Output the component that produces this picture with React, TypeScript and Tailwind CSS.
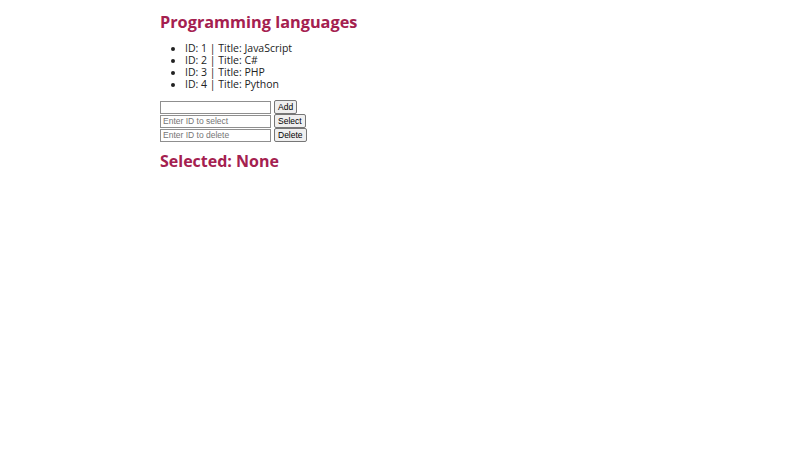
import { useState } from 'react'

type Language = { id: number; title: string }

const initialLanguages: Language[] = [
  { id: 1, title: 'JavaScript' },
  { id: 2, title: 'C#' },
  { id: 3, title: 'PHP' },
  { id: 4, title: 'Python' },
]

export default function App() {
  const [languages, setLanguages] = useState<Language[]>(initialLanguages)
  const [newTitle, setNewTitle] = useState('')
  const [selectId, setSelectId] = useState('')
  const [deleteId, setDeleteId] = useState('')
  const [selected, setSelected] = useState<Language | null>(null)

  const inputClass =
    'h-[13px] w-[111px] border border-[#8f8f8f] bg-white px-[2px] font-["Liberation_Sans",sans-serif] text-[8.5px] leading-none text-black placeholder:text-[#757575] outline-none'
  const buttonClass =
    'ml-[3px] h-[14px] rounded-[2px] border border-[#767676] bg-[#efefef] px-[3px] font-["Liberation_Sans",sans-serif] text-[8.5px] leading-none text-black'

  return (
    <div className="min-h-[450px] bg-white font-['Open_Sans',sans-serif]">
      <div className="mx-auto w-3/5 pt-[12px]">
        <h1 className="text-[16.3px] leading-[20px] font-bold text-[#a4204f]">Programming languages</h1>
        <ul className="mt-[10px] list-disc pl-[25px] text-[10.5px] leading-[12px] text-[#222]">
          {languages.map(language => (
            <li key={language.id}>{`ID: ${language.id} | Title: ${language.title}`}</li>
          ))}
        </ul>
        <div className="mt-[10px] flex flex-col">
          <div className="flex items-center">
            <input className={inputClass} onChange={e => setNewTitle(e.target.value)} value={newTitle} />
            <button
              className={buttonClass}
              onClick={() => {
                if (!newTitle.trim()) return
                const nextId = languages.length ? Math.max(...languages.map(l => l.id)) + 1 : 1
                setLanguages([...languages, { id: nextId, title: newTitle.trim() }])
                setNewTitle('')
              }}
              type="button"
            >
              Add
            </button>
          </div>
          <div className="flex items-center">
            <input
              className={inputClass}
              onChange={e => setSelectId(e.target.value)}
              placeholder="Enter ID to select"
              value={selectId}
            />
            <button
              className={buttonClass}
              onClick={() => setSelected(languages.find(l => l.id === Number(selectId)) ?? null)}
              type="button"
            >
              Select
            </button>
          </div>
          <div className="flex items-center">
            <input
              className={inputClass}
              onChange={e => setDeleteId(e.target.value)}
              placeholder="Enter ID to delete"
              value={deleteId}
            />
            <button
              className={buttonClass}
              onClick={() => {
                setLanguages(languages.filter(l => l.id !== Number(deleteId)))
                setDeleteId('')
              }}
              type="button"
            >
              Delete
            </button>
          </div>
        </div>
        <h2 className="mt-[9px] text-[16px] leading-[20px] font-bold text-[#a4204f]">
          {`Selected: ${selected ? selected.title : 'None'}`}
        </h2>
      </div>
    </div>
  )
}
